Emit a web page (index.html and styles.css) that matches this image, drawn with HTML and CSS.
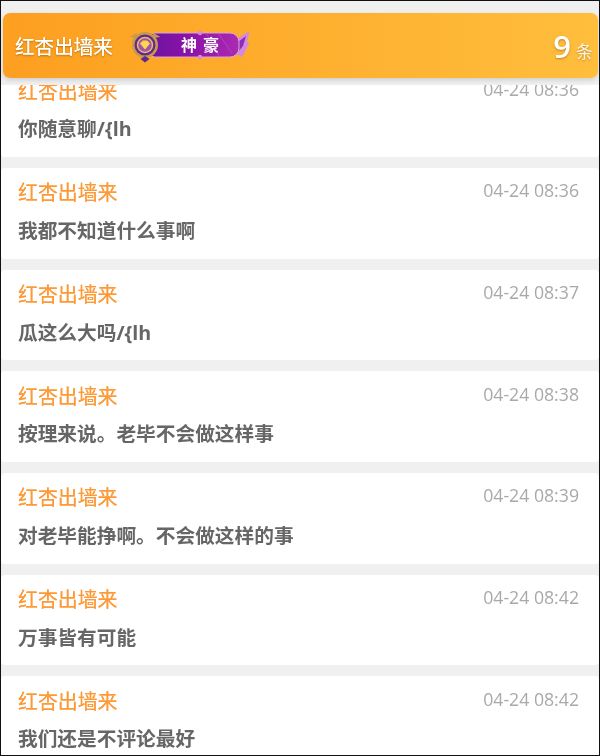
FILE: index.html
```html
<!DOCTYPE html>
<html>
<head>
  <title>红杏出墙来</title>
  <link rel="stylesheet" href="styles.css">
</head>
<body>
  <div class="page">
    <div class="list">
      <div class="card">
        <div class="card-head"><span class="name">红杏出墙来</span><span class="time">04-24 08:36</span></div>
        <p class="msg">你随意聊/{lh</p>
      </div>
      <div class="card">
        <div class="card-head"><span class="name">红杏出墙来</span><span class="time">04-24 08:36</span></div>
        <p class="msg">我都不知道什么事啊</p>
      </div>
      <div class="card">
        <div class="card-head"><span class="name">红杏出墙来</span><span class="time">04-24 08:37</span></div>
        <p class="msg">瓜这么大吗/{lh</p>
      </div>
      <div class="card">
        <div class="card-head"><span class="name">红杏出墙来</span><span class="time">04-24 08:38</span></div>
        <p class="msg">按理来说。老毕不会做这样事</p>
      </div>
      <div class="card">
        <div class="card-head"><span class="name">红杏出墙来</span><span class="time">04-24 08:39</span></div>
        <p class="msg">对老毕能挣啊。不会做这样的事</p>
      </div>
      <div class="card">
        <div class="card-head"><span class="name">红杏出墙来</span><span class="time">04-24 08:42</span></div>
        <p class="msg">万事皆有可能</p>
      </div>
      <div class="card">
        <div class="card-head"><span class="name">红杏出墙来</span><span class="time">04-24 08:42</span></div>
        <p class="msg">我们还是不评论最好</p>
      </div>
    </div>

    <div class="top">
      <div class="bar">
        <div class="bar-user">
          <span class="bar-name">红杏出墙来</span>
          <svg class="badge" width="124" height="36" viewBox="0 0 124 36">
            <defs>
              <linearGradient id="pill" x1="0" y1="0" x2="1" y2="0">
                <stop offset="0" stop-color="#6a149e"/>
                <stop offset="0.45" stop-color="#8a12a8"/>
                <stop offset="1" stop-color="#ac2ab2"/>
              </linearGradient>
            </defs>
            <!-- wing on the right end -->
            <path d="M108 11 L122 3 L119 13 L121 16 L114 29 L107 25 Z" fill="#d18ae0"/>
            <path d="M110 14 L118 8 L115 18 L109 25 Z" fill="#8d2bb4"/>
            <!-- pill -->
            <rect x="18" y="5" width="93" height="24" rx="9" fill="url(#pill)" stroke="#d9a5d8" stroke-width="1"/>
            <path d="M78 5 L92 29 M90 5 L104 25" stroke="#c455c8" stroke-width="1" opacity="0.6"/>
            <circle cx="72" cy="5" r="2.2" fill="#d88ad8"/>
            <circle cx="72" cy="29" r="2.2" fill="#d88ad8"/>
            <!-- medal -->
            <circle cx="17" cy="17" r="13" fill="#c6994e"/>
            <circle cx="17" cy="17" r="10.5" fill="#5f2c8e"/>
            <circle cx="17" cy="17" r="7.5" fill="#a054b0" stroke="#ecb766" stroke-width="1.5"/>
            <path d="M12 15.5 L15 12.5 H19 L22 15.5 L17 21.5 Z" fill="#fbd84a"/>
            <path d="M12.5 31 L17 28 L21.5 31 L17 34.5 Z" fill="#5a2a90"/>
            <path d="M1.5 9 L8.5 5 L9.5 10 Z M32.5 9 L25.5 5 L24.5 10 Z" fill="#c6994e"/>
            <text class="badge-text" x="75" y="22.5" text-anchor="middle">神豪</text>
          </svg>
        </div>
        <div class="bar-count"><span class="num">9</span><span class="unit">条</span></div>
      </div>
    </div>
  </div>
</body>
</html>
```

FILE: styles.css
```css
html, body {
  margin: 0;
  padding: 0;
}
body {
  font-family: "Open Sans", "Noto Sans CJK SC", sans-serif;
  background-color: #fff;
}
.page {
  position: relative;
  width: 600px;
  height: 756px;
  box-sizing: border-box;
  border: 1px solid #111;
  overflow: hidden;
  background-color: #f0f0f0;
}
.top {
  position: absolute;
  top: 0;
  left: 0;
  right: 0;
  height: 84px;
  box-sizing: border-box;
  padding: 12px 1px 0 2px;
  background-color: #f0f0f0;
  filter: blur(0.5px);
}
.bar {
  display: flex;
  align-items: center;
  justify-content: space-between;
  height: 65px;
  padding: 0 5px 0 12px;
  border-radius: 7px;
  background: linear-gradient(90deg, #fd9f20, #ffbe3c);
  box-shadow: 0 2px 5px rgba(0, 0, 0, 0.15);
  color: #fff;
}
.bar-user {
  display: flex;
  align-items: center;
  gap: 15px;
}
.bar-name {
  font-size: 19.6px;
  text-shadow: 0 0 0.6px #fff, 0 1px 2px rgba(120, 70, 0, 0.6);
}
.badge-text {
  font-family: "Noto Sans CJK SC", sans-serif;
  font-size: 16px;
  font-weight: 700;
  letter-spacing: 6px;
  fill: #fff;
}
.bar-count {
  display: flex;
  align-items: baseline;
  gap: 5px;
  text-shadow: 0 1px 2px rgba(120, 70, 0, 0.5);
}
.num {
  font-size: 31px;
  font-weight: 600;
}
.unit {
  font-size: 17px;
  opacity: 0.85;
}
.list {
  display: flex;
  flex-direction: column;
  gap: 11px;
  padding-top: 65.2px;
  filter: blur(0.5px);
}
.card {
  flex: none;
  height: 90.7px;
  box-sizing: border-box;
  padding: 12px 20px 0 17px;
  border-radius: 4px;
  background-color: #fff;
}
.card-head {
  display: flex;
  align-items: center;
  justify-content: space-between;
  height: 24px;
}
.name {
  font-size: 19.9px;
  color: #fd9a38;
  text-shadow: 0 0 0.6px #fd9a38;
}
.time {
  margin-bottom: 3px;
  font-size: 17.7px;
  color: #a9a9a9;
}
.msg {
  margin: 14px 0 0;
  font-size: 19.7px;
  line-height: 26px;
  font-weight: 700;
  color: #666;
}
```
